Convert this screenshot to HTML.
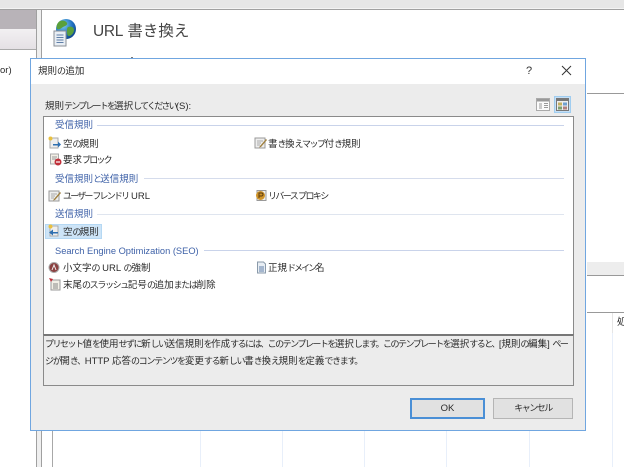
<!DOCTYPE html>
<html lang="ja">
<head>
<meta charset="utf-8">
<style>
html,body{margin:0;padding:0;background:#fff;}
#p{position:relative;width:624px;height:467px;overflow:hidden;background:#fff;font-family:"Liberation Sans","Noto Sans CJK JP",sans-serif;font-size:9.5px;color:#2a2a2a;filter:blur(0.35px);}
.a{position:absolute;}
.t{position:absolute;white-space:nowrap;line-height:12px;}
.h{color:#3f62a8;}
.r{position:absolute;height:1px;background:#c9d3ea;}
.ic{position:absolute;width:13px;height:13px;}
.k{font-size:9px;letter-spacing:var(--l,-1.8px);}
</style>
</head>
<body>
<div id="p">
<!-- background app -->
<div class="a" style="left:0;top:0;width:624px;height:8px;background:#e6e6e6"></div>
<div class="a" style="left:0;top:8px;width:624px;height:1px;background:#f3f3f3"></div>
<div class="a" style="left:0;top:9px;width:624px;height:1px;background:#a0a0a0"></div>
<div class="a" style="left:0;top:10px;width:36px;height:19px;background:#b8b3b8"></div>
<div class="a" style="left:0;top:29px;width:36px;height:20px;background:linear-gradient(#f2f0f2,#e4e0e4)"></div>
<div class="a" style="left:0;top:49px;width:36px;height:1px;background:#aaa"></div>
<div class="a" style="left:36px;top:9px;width:1px;height:458px;background:#a0a0a0"></div>
<div class="a" style="left:37px;top:10px;width:4px;height:457px;background:#efefef"></div>
<div class="a" style="left:41px;top:9px;width:1px;height:458px;background:#a0a0a0"></div>
<div class="a" style="left:52px;top:430px;width:1px;height:37px;background:#a8a8a8"></div>
<div class="t" style="left:0;top:65px">or)</div>
<svg class="a" style="left:52px;top:18px" width="28" height="30" viewBox="0 0 28 30">
<defs><radialGradient id="g" cx=".35" cy=".3" r=".8"><stop offset="0" stop-color="#7fd0f0"/><stop offset=".6" stop-color="#1f6fc0"/><stop offset="1" stop-color="#0f3f80"/></radialGradient></defs>
<circle cx="14" cy="11" r="10" fill="url(#g)"/>
<path d="M8 3c3-1 6 0 7 2s-2 3-4 4-3 3-6 2c-1-3 0-6 3-8zM16 9c3-1 6 0 6 3s-3 6-5 6-2-3-2-5 0-3 1-4z" fill="#5aa03c"/>
<rect x="2" y="13" width="12" height="15" fill="#e8eef4" stroke="#8a8f96"/>
<path d="M4.5 17h7M4.5 19.5h7M4.5 22h7M4.5 24.5h7" stroke="#5f7fa8" stroke-width="1"/>
</svg>
<div class="t" style="left:93px;top:23px;font-size:15.5px;line-height:18px;color:#444"><span style="letter-spacing:-.3px">URL</span> 書き換え</div>
<div class="a" style="left:131px;top:57px;width:2px;height:1px;background:#777"></div>
<div class="a" style="left:587px;top:93px;width:37px;height:1px;background:#999"></div>
<div class="a" style="left:587px;top:262px;width:37px;height:13px;background:#ededed"></div>
<div class="a" style="left:587px;top:275px;width:37px;height:1px;background:#999"></div>
<div class="a" style="left:587px;top:312px;width:37px;height:1px;background:#999"></div>
<div class="a" style="left:612px;top:313px;width:1px;height:20px;background:#e5e5e5"></div>
<div class="t" style="left:617px;top:317px">処</div>
<div class="a" style="left:200px;top:431px;width:1px;height:36px;background:#e8effa"></div>
<div class="a" style="left:282px;top:431px;width:1px;height:36px;background:#e8effa"></div>
<div class="a" style="left:364px;top:431px;width:1px;height:36px;background:#e8effa"></div>
<div class="a" style="left:446px;top:431px;width:1px;height:36px;background:#e8effa"></div>
<div class="a" style="left:529px;top:431px;width:1px;height:36px;background:#e8effa"></div>
<div class="a" style="left:612px;top:333px;width:1px;height:134px;background:#e8effa"></div>

<!-- dialog -->
<div class="a" style="left:30px;top:58px;width:554px;height:371px;border:1px solid #70a6e0;background:#ececec"></div>
<div class="a" style="left:31px;top:59px;width:554px;height:25px;background:#fff"></div>
<div class="t" style="left:38px;top:65px">規則<span class="k" style="--l:-.6px">の</span>追加</div>
<div class="t" style="left:526px;top:65px;font-size:11px;color:#333">?</div>
<svg class="a" style="left:561px;top:65px" width="11" height="11" viewBox="0 0 11 11"><path d="M1 1l9 9M10 1l-9 9" stroke="#333" stroke-width="1" fill="none"/></svg>
<div class="t" style="left:45px;top:100px">規則<span class="k">テンプレートを</span>選択<span class="k">してください</span>(S):</div>

<!-- view buttons -->
<svg class="a" style="left:536px;top:98px" width="16" height="14" viewBox="0 0 16 14">
<rect x=".5" y=".5" width="13" height="12" fill="#fafafa" stroke="#aaa"/><rect x="1" y="1" width="12" height="2.5" fill="#999"/>
<path d="M3 6h3M3 8h3M3 10h3M8 5.5h4M8 7.5h4M8 9.5h4" stroke="#999"/></svg>
<div class="a" style="left:554px;top:96px;width:17px;height:17px;background:#c5dff5;border:1px solid #a0cdf0;box-sizing:border-box"></div>
<svg class="a" style="left:556px;top:98px" width="14" height="14" viewBox="0 0 14 14">
<rect x=".5" y=".5" width="12" height="12" fill="#eee" stroke="#777"/><rect x="1" y="1" width="11" height="2" fill="#777"/>
<rect x="2" y="4.5" width="4" height="3" fill="#c4b060"/><rect x="7" y="4.5" width="4" height="3" fill="#6f9fd0"/>
<rect x="2" y="8.5" width="4" height="3" fill="#7f9f70"/><rect x="7" y="8.5" width="4" height="3" fill="#b08080"/></svg>

<!-- list -->
<div class="a" style="left:43px;top:116px;width:531px;height:219px;background:#fff;border:1px solid #8a8a8a;box-sizing:border-box;border-bottom:0"></div>

<div class="t h" style="left:55px;top:120px">受信規則</div><div class="r" style="left:97px;top:125px;width:467px"></div>
<div class="t" style="left:63px;top:138px">空<span class="k">の</span>規則</div>
<div class="t" style="left:268px;top:138px;--l:-1.5px">書<span class="k">き</span>換<span class="k">えマップ</span>付<span class="k">き</span>規則</div>
<div class="t" style="left:63px;top:154px">要求<span class="k">ブロック</span></div>
<div class="t h" style="left:55px;top:173px">受信規則<span class="k">と</span>送信規則</div><div class="r" style="left:144px;top:178px;width:420px;background:#d5dcec"></div>
<div class="t" style="left:63px;top:190px"><span class="k">ユーザー フレンドリ</span> URL</div>
<div class="t" style="left:268px;top:190px;--l:-1.6px"><span class="k">リバース プロキシ</span></div>
<div class="t h" style="left:55px;top:209px">送信規則</div><div class="r" style="left:97px;top:214px;width:467px;background:#dfe5ef"></div>
<div class="a" style="left:45px;top:224px;width:57px;height:15px;background:#cde4f7;border:1px solid #b5d8f3;box-sizing:border-box"></div>
<div class="t" style="left:63px;top:226px">空<span class="k">の</span>規則</div>
<div class="t h" style="left:55px;top:245px;font-size:9.3px">Search Engine Optimization (SEO)</div><div class="r" style="left:204px;top:250px;width:360px"></div>
<div class="t" style="left:63px;top:262px;--l:-1px">小文字<span class="k">の</span> URL <span class="k">の</span>強制</div>
<div class="t" style="left:268px;top:262px;--l:-2px">正規<span class="k">ドメイン</span>名</div>
<div class="t" style="left:63px;top:279px;--l:-1.35px">末尾<span class="k">のスラッシュ</span>記号<span class="k">の</span>追加<span class="k">または</span>削除</div>

<!-- icons -->
<svg class="ic" style="left:48px;top:136px" viewBox="0 0 13 13"><rect x="2" y="2" width="8" height="10" fill="#eee" stroke="#aaa"/><circle cx="2.5" cy="2.5" r="2" fill="#e8c040"/><path d="M5 8h5V5.5l3 3-3 3V9.5H5z" fill="#2f6fb0"/></svg>
<svg class="ic" style="left:49px;top:153px" viewBox="0 0 13 13"><rect x="1.5" y="1" width="8" height="10" fill="#f2efe6" stroke="#aaa"/><path d="M3 4h5M3 6h4" stroke="#999"/><circle cx="9" cy="9" r="3.5" fill="#c0303a"/><path d="M7 9h4" stroke="#fff" stroke-width="1.2"/></svg>
<svg class="ic" style="left:48px;top:189px" viewBox="0 0 13 13"><rect x="1" y="2" width="10" height="10" fill="#eee" stroke="#999"/><path d="M3 5h6M3 7h4M3 9h3" stroke="#aaa"/><path d="M6 10l6-7 1 1-6 7-2 .5z" fill="#a08040"/></svg>
<svg class="ic" style="left:254px;top:136px" viewBox="0 0 13 13"><rect x="1" y="2" width="10" height="10" fill="#eee" stroke="#999"/><path d="M3 5h6M3 7h4M3 9h3" stroke="#aaa"/><path d="M6 10l6-7 1 1-6 7-2 .5z" fill="#a08040"/></svg>
<svg class="ic" style="left:254px;top:189px" viewBox="0 0 13 13"><rect x="3" y="1.5" width="9" height="10" fill="#eee" stroke="#999"/><circle cx="6.5" cy="6.5" r="4.5" fill="#d0952a"/><path d="M5 9V4h2.5a1.5 1.5 0 0 1 0 3H5" stroke="#5a3a10" fill="none"/></svg>
<svg class="ic" style="left:48px;top:224px" viewBox="0 0 13 13"><rect x="2" y="2" width="8" height="10" fill="#eee" stroke="#aaa"/><circle cx="2.5" cy="2.5" r="2" fill="#e8c040"/><path d="M10 8H5V5.5l-4 3 4 3V9.5h5z" fill="#2f6fb0"/></svg>
<svg class="ic" style="left:48px;top:261px" viewBox="0 0 13 13"><circle cx="6" cy="6.5" r="5" fill="#8a4040" stroke="#aaa"/><path d="M4 9l2-5 2 5" stroke="#eee" fill="none"/></svg>
<svg class="ic" style="left:255px;top:261px" viewBox="0 0 13 13"><path d="M2.5 1h6l2 2v9h-8z" fill="#e8eef4" stroke="#8a9aaa"/><path d="M4 6h5M4 8h5M4 10h5" stroke="#5f7fa8"/></svg>
<svg class="ic" style="left:49px;top:278px" viewBox="0 0 13 13"><rect x="2" y="2" width="9" height="10" fill="#f2efe6" stroke="#999"/><path d="M4 6h5M4 8h5M4 10h5" stroke="#888"/><path d="M0 0l4 1-2 3z" fill="#c0303a"/></svg>

<!-- description -->
<div class="a" style="left:43px;top:334px;width:531px;height:52px;background:#ececec;border:1px solid #8a8a8a;border-top:2px solid #777;box-sizing:border-box"></div>
<div class="t" style="left:45px;top:338px;--l:-1.5px"><span class="k">プリセット</span>値<span class="k">を</span>使用<span class="k">せずに</span>新<span class="k">しい</span>送信規則<span class="k">を</span>作成<span class="k">するには、このテンプレートを</span>選択<span class="k">します。このテンプレートを</span>選択<span class="k">すると、</span>[規則<span class="k">の</span>編集] <span class="k">ペー</span></div>
<div class="t" style="left:45px;top:355px;--l:-1.3px"><span class="k">ジが</span>開<span class="k">き、</span>HTTP 応答<span class="k">のコンテンツを</span>変更<span class="k">する</span>新<span class="k">しい</span>書<span class="k">き</span>換<span class="k">え</span>規則<span class="k">を</span>定義<span class="k">できます。</span></div>

<!-- buttons -->
<div class="a" style="left:410px;top:398px;width:75px;height:21px;background:#e1e1e1;border:2px solid #4a8fd6;box-sizing:border-box;text-align:center;line-height:17px">OK</div>
<div class="a" style="left:493px;top:398px;width:80px;height:21px;background:#e1e1e1;border:1px solid #b5b5b5;box-sizing:border-box;text-align:center;line-height:19px"><span class="k" style="--l:-1.5px">キャンセル</span></div>
</div>
</body>
</html>
